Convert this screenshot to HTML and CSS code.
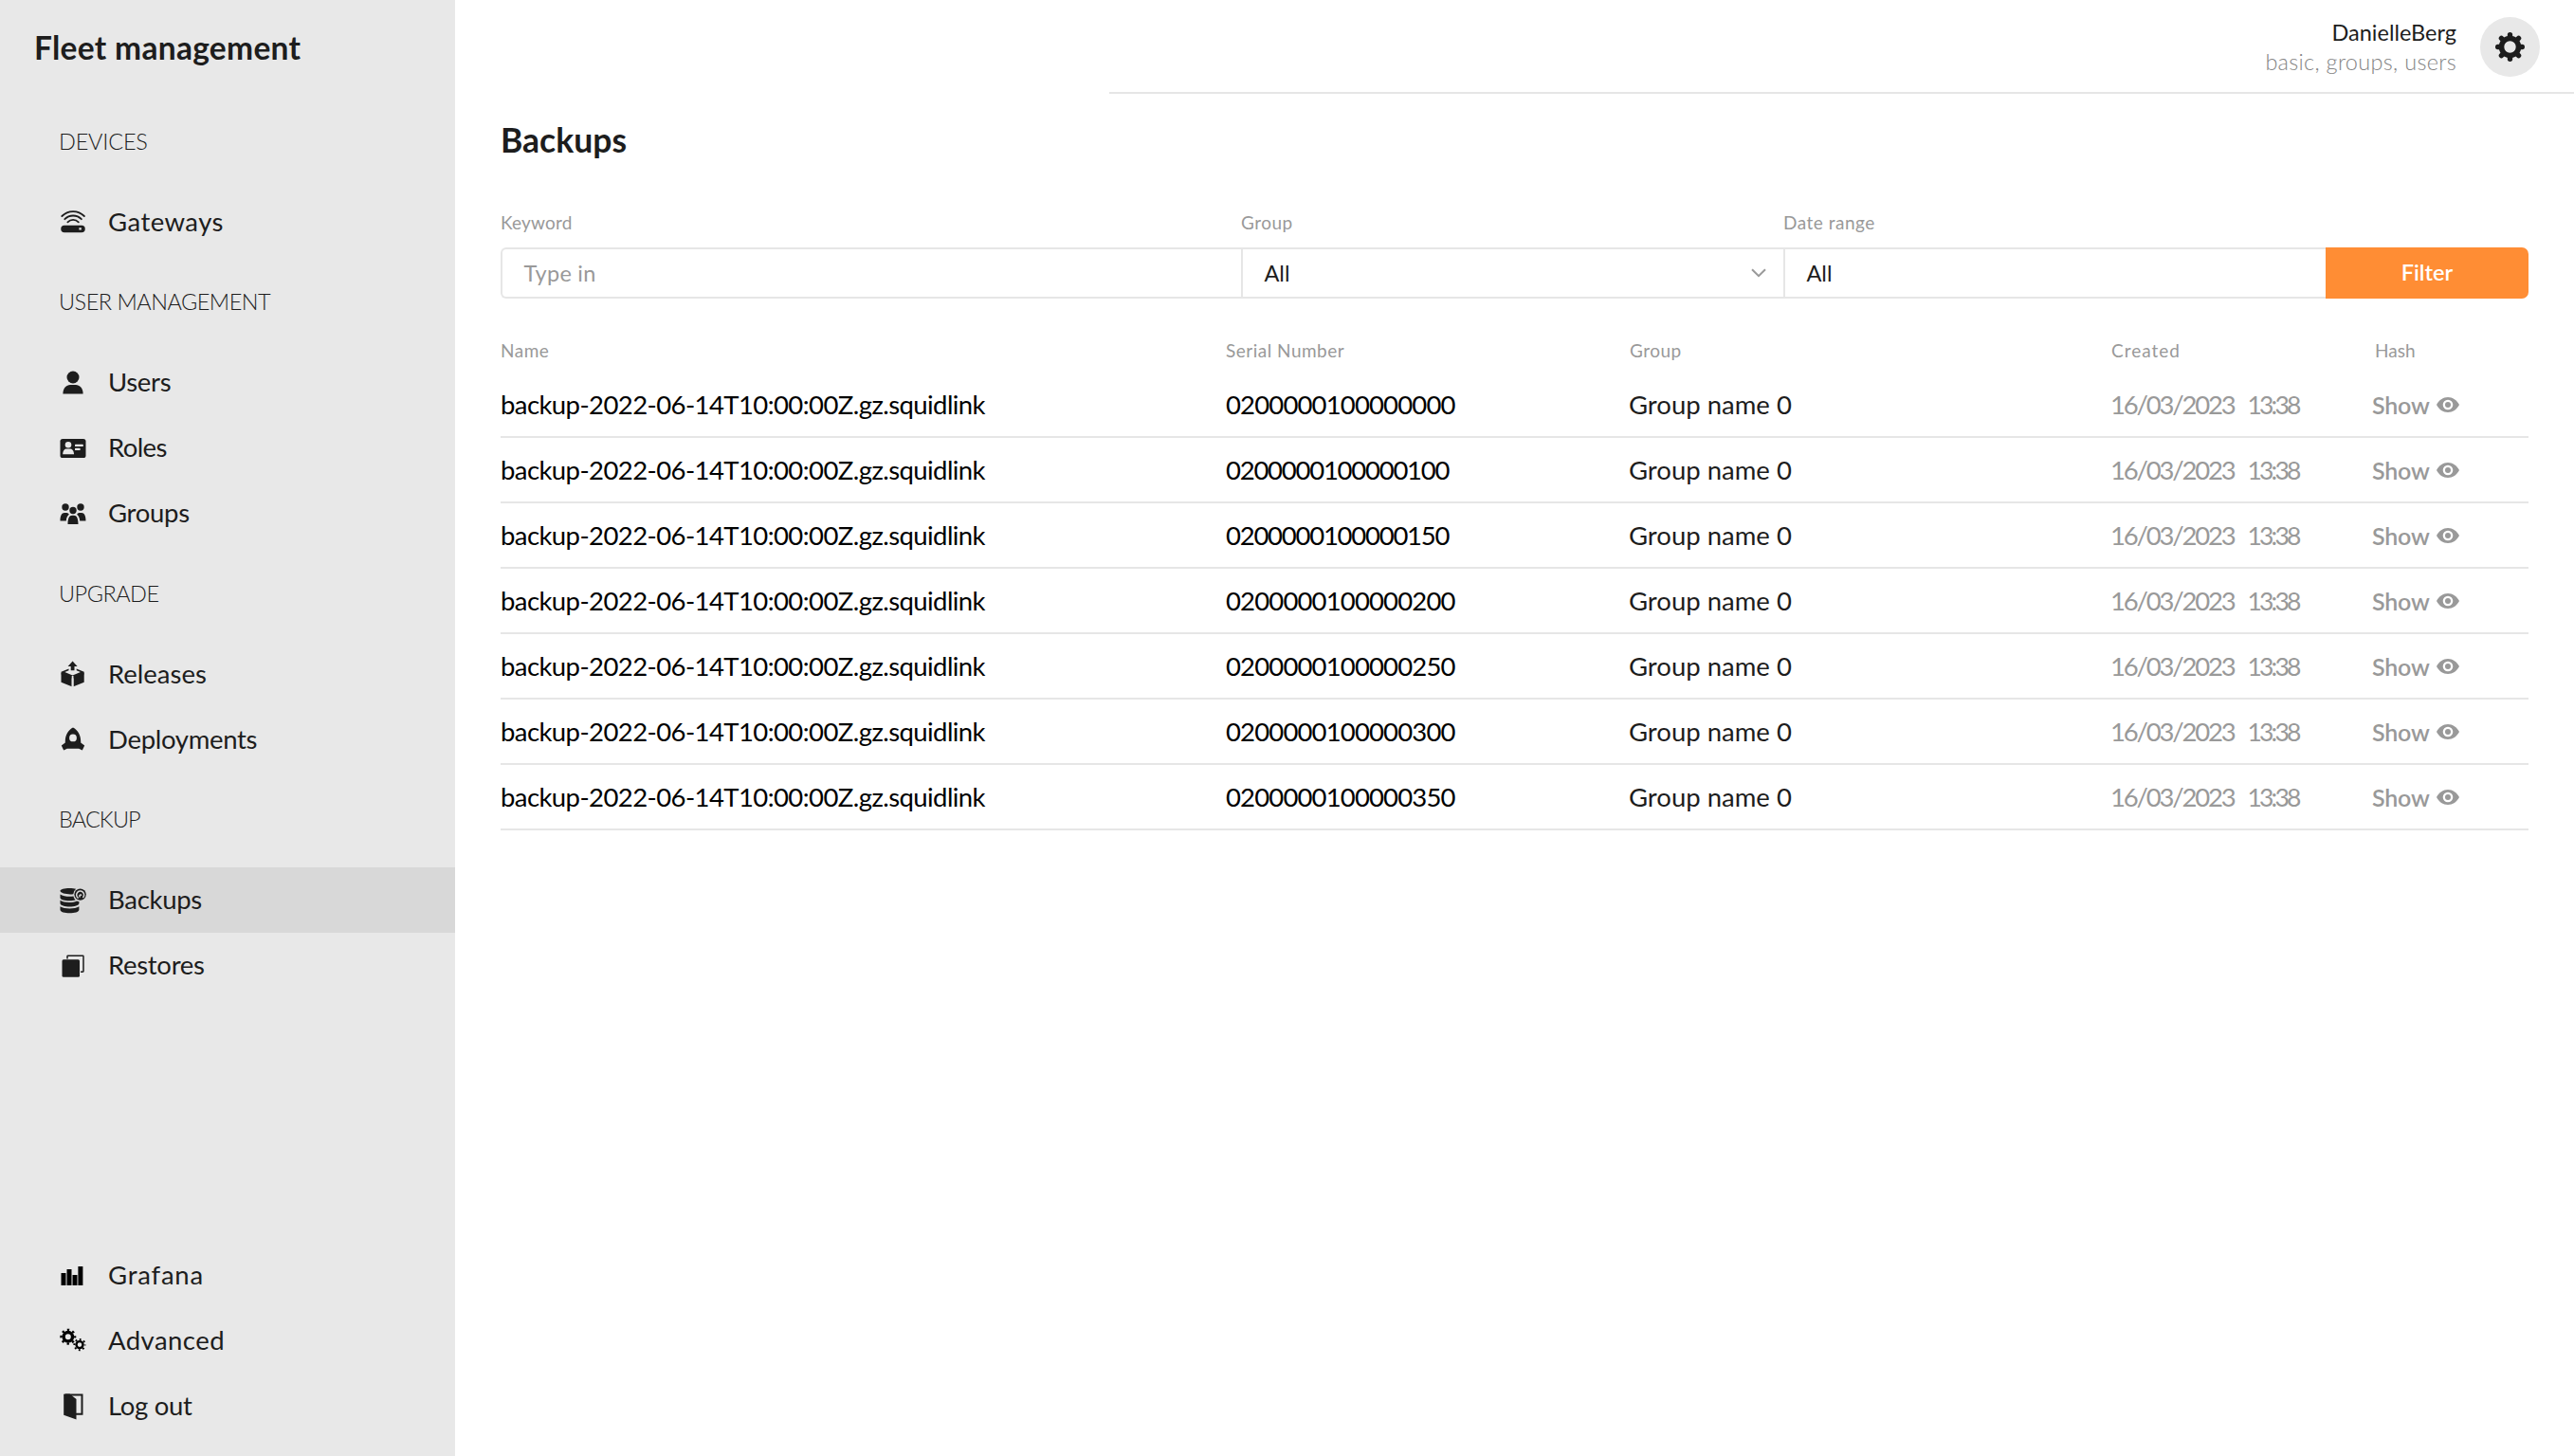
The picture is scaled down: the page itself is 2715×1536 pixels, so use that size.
FILE: index.html
```html
<!DOCTYPE html>
<html lang="en">
<head>
	<meta charset="UTF-8">
	<title>Fleet management</title>
	<link rel="stylesheet" href="styles.css">
</head>
<body>
	<div class="sidebar">
		<h1 class="brand">Fleet management</h1>
		<div class="nav">
			<h2 class="nav-title devices">DEVICES</h2>
			<a class="nav-item gateways" href="#">
				<svg class="icon" viewBox="0 0 28 28"><g fill="none" stroke="#1d1d1d" stroke-width="1.8" stroke-linecap="round"><path d="M2.300 8a16.500 16.500 0 0 1 23.600 0M5.300 11.200a12.300 12.300 0 0 1 17.600 0M8.400 14.300a8 8 0 0 1 11.400 0"/></g><path fill-rule="evenodd" d="M5 17.700h18a3.700 3.700 0 0 1 0 7.500H5a3.700 3.700 0 0 1 0-7.500zm15.400 2.500v2.400h2.400v-2.400z"/></svg>
				<span>Gateways</span>
			</a>
			<h2 class="nav-title management">USER MANAGEMENT</h2>
			<a class="nav-item users" href="#">
				<svg class="icon" viewBox="0 0 28 28"><circle cx="14" cy="8" r="6.500"/><path d="M3.400 25.500C3.400 19.500 7 16.100 11 16.100h6c4 0 7.600 3.400 7.600 9.400z"/></svg>
				<span>Users</span>
			</a>
			<a class="nav-item roles" href="#">
				<svg class="icon" viewBox="0 0 28 28"><rect x=".5" y="4" width="27" height="20" rx="2.600"/><g fill="#e8e8e8"><circle cx="9" cy="10.300" r="3.300"/><path d="M3.200 20.300c0-4 2-5.800 4-5.800h3.600c2.200 0 4.200 1.800 4.200 5.800z"/><rect x="16" y="9.800" width="8.800" height="2.200" rx=".6"/><rect x="16" y="13.800" width="5.600" height="2.200" rx=".6"/></g></svg>
				<span>Roles</span>
			</a>
			<a class="nav-item groups" href="#">
				<svg class="icon" viewBox="0 0 28 28"><circle cx="6" cy="7" r="3.700"/><circle cx="22" cy="7" r="3.700"/><circle cx="14" cy="10.500" r="3.700"/><path d="M.5 21.500c0-5.500 1.500-8.500 4.500-8.500h2.500c1 0 1.800.8 2.300 1.700-1.800 1.500-2.800 3.500-3 6.800zM27.500 21.500c0-5.500-1.500-8.500-4.500-8.500h-2.500c-1 0-1.800.8-2.300 1.700 1.800 1.500 2.800 3.500 3 6.800zM8.500 25c0-6 1.500-9.200 4.500-9.200h2c3 0 4.500 3.200 4.500 9.200z"/></svg>
				<span>Groups</span>
			</a>
			<h2 class="nav-title upgrade">UPGRADE</h2>
			<a class="nav-item releases" href="#">
				<svg class="icon" viewBox="0 0 28 28"><path d="M13.600.5l5 5.400h-3.100v4.400h-3.800V5.900H8.600zM1.500 13.200l11.200 4.300v9.800L1.500 22.800zM25.700 13.200l-11.200 4.300v9.800l11.200-4.500z"/><path d="M1.500 11.800l8-3.200v1.700l-4.200 1.800 8.300 3.400 8.300-3.400-4.200-1.800V8.600l8 3.200v2.400l-11 4.300h-2.200l-11-4.300z"/><path d="M13.600 16v12" fill="none" stroke="#e8e8e8" stroke-width="1.800"/></svg>
				<span>Releases</span>
			</a>
			<a class="nav-item deployments" href="#">
				<svg class="icon" viewBox="0 0 28 28"><path fill-rule="evenodd" d="M14 1.500c5 2.600 8.200 8 8.200 14.500v1.500l4 3-2.400 5-3.600-1.700H7.800l-3.600 1.700-2.400-5 4-3V16c0-6.500 3.200-11.900 8.200-14.500zm0 7a3.900 3.900 0 1 0 0 7.800 3.900 3.900 0 0 0 0-7.800z"/></svg>
				<span>Deployments</span>
			</a>
			<h2 class="nav-title backup">BACKUP</h2>
			<a class="nav-item active backups" href="#">
				<svg class="icon" viewBox="0 0 28 28"><path d="M.5 3.800C.5 2.200 5 1 10.300 1c2.700 0 5 .3 6.800.8a8 8 0 0 0-2.800 5.400c-5.300.8-13.800-.7-13.800-3.400zM.5 7.500c3 2 9 2.800 14 2 .4 1.600 1.200 3 2.300 4-5.600 1.400-16.300.7-16.300-2.500zM.5 13.800c3.800 2.700 12.500 3 17.600.7.8.4 1.500.5 2.300.5v2c0 4.600-19.900 4.600-19.900 0zM.5 20.300c4.500 3 15.400 3 19.900 0v3.500c0 4.700-19.900 4.700-19.900 0z"/><circle cx="21.600" cy="7.600" r="6.200"/><path fill="none" stroke="#d8d8d8" stroke-width="1.500" d="M19.600 11.500a4 4 0 1 1 4.800-.5M21 10.500V8.600a1.200 1.200 0 0 1 2 0"/></svg>
				<span>Backups</span>
			</a>
			<a class="nav-item restores" href="#">
				<svg class="icon" viewBox="0 0 28 28"><rect x="2.500" y="7.300" width="18.500" height="18.500" rx="1.500"/><path fill="none" stroke="#1d1d1d" stroke-width="1.500" d="M8 6.500V3.900a.7.700 0 0 1 .7-.7h15.600a.7.700 0 0 1 .7.700v15.600a.7.700 0 0 1-.7.700H22"/></svg>
				<span>Restores</span>
			</a>
		</div>
		<div class="nav nav-bottom">
			<a class="nav-item grafana" href="#">
				<svg class="icon black" viewBox="0 0 28 28"><path d="M1.500 11h5v13h-5zM7.500 7h5v17h-5zM13.500 13h5v11h-5zM19.400 4h5v20h-5z"/></svg>
				<span>Grafana</span>
			</a>
			<a class="nav-item advanced" href="#">
				<svg class="icon black" viewBox="0 0 28 28"><g fill="none" stroke="#000"><circle cx="8.800" cy="9.200" r="4.700" stroke-width="3.400"/><circle cx="8.800" cy="9.200" r="7.300" stroke-width="2.400" stroke-dasharray="2.400 3.330" stroke-dashoffset="1.200"/><circle cx="21" cy="17.600" r="3.500" stroke-width="2.400"/><circle cx="21" cy="17.600" r="5.600" stroke-width="2" stroke-dasharray="1.800 2.600" stroke-dashoffset=".9"/></g></svg>
				<span>Advanced</span>
			</a>
			<a class="nav-item logout" href="#">
				<svg class="icon" viewBox="0 0 28 28"><path d="M5 .5h5.500L17.500 6v21.500L4.200 22.700V1.300A.8.800 0 0 1 5 .5z"/><path fill="none" stroke="#1d1d1d" stroke-width="2" d="M6 1.500h17.500v20.300H17"/></svg>
				<span>Log out</span>
			</a>
		</div>
	</div>
	<div class="main">
		<div class="topbar">
			<div class="user">
				<div class="user-name">DanielleBerg</div>
				<div class="user-roles">basic, groups, users</div>
			</div>
			<a class="settings" href="#">
				<svg viewBox="0 0 30 30"><circle cx="15" cy="15" r="8.700" fill="none" stroke="#1d1d1d" stroke-width="5.400"/><g fill="none" stroke="#1d1d1d" stroke-width="5.200" stroke-linecap="round"><path d="M15 2.600v3M15 24.400v3M2.600 15h3M24.400 15h3M6.200 6.200l2 2M21.800 21.800l2 2M6.200 23.800l2-2M21.800 8.200l2-2"/></g></svg>
			</a>
		</div>
		<div class="content">
			<h1 class="page-title">Backups</h1>
			<div class="filters">
				<div class="field field-keyword">
					<label>Keyword</label>
					<div class="control placeholder">Type in</div>
				</div>
				<div class="field field-group">
					<label>Group</label>
					<div class="control">
						<span>All</span>
						<svg class="chevron" viewBox="0 0 16 10"><path d="M1 1.200l7 7 7-7"/></svg>
					</div>
				</div>
				<div class="field field-date">
					<label>Date range</label>
					<div class="control">All</div>
				</div>
				<a class="filter-btn" href="#">Filter</a>
			</div>
			<div class="table">
				<div class="row head">
					<span>Name</span><span>Serial Number</span><span class="head-group">Group</span><span class="head-created">Created</span><span class="head-hash">Hash</span>
				</div>
				<div id="rows"></div>
			</div>
		</div>
	</div>
	<script type="text/javascript">
		let oRows = document.getElementById("rows");
		let serials = ["000", "100", "150", "200", "250", "300", "350"];
		let eye = '<svg class="eye" viewBox="0 0 24 16"><path fill-rule="evenodd" d="M12 0c5 0 9.500 3 12 8-2.500 5-7 8-12 8S2.500 13 0 8c2.500-5 7-8 12-8zm0 2.700a5.300 5.300 0 1 0 0 10.600 5.300 5.300 0 0 0 0-10.600z"/><circle cx="12" cy="8" r="3"/></svg>';

		oRows.innerHTML = serials.map(function(s){
			return '<div class="row">'
				+ '<span class="name">backup-2022-06-14T10:00:00Z.gz.squidlink</span>'
				+ '<span class="serial">0200000100000' + s + '</span>'
				+ '<span class="group">Group name 0</span>'
				+ '<span class="created"><span class="date">16/03/2023</span><span class="time">13:38</span></span>'
				+ '<a class="show" href="#"><span>Show</span>' + eye + '</a>'
				+ '</div>';
		}).join("");
	</script>
</body>
</html>
```
FILE: styles.css
```css
* {
	margin: 0;
	padding: 0;
	box-sizing: border-box;
}
body {
	display: flex;
	height: 1536px;
	font-family: Lato, "Open Sans", sans-serif;
	font-size: 27.5px;
	line-height: 32px;
	color: #1d1d1d;
	background: #fff;
	overflow: hidden;
	white-space: nowrap;
}
a {
	text-decoration: none;
	color: inherit;
}

/* sidebar */
.sidebar {
	display: flex;
	flex-direction: column;
	flex: none;
	width: 480px;
	height: 1536px;
	padding-bottom: 18px;
	background: #e8e8e8;
}
.brand {
	height: 99.6px;
	padding: 30px 0 0 36px;
	font-size: 33.5px;
	line-height: 40px;
	font-weight: 700;
	letter-spacing: .3px;
}
.nav-title {
	display: flex;
	align-items: center;
	height: 100.4px;
	padding: 0 0 2px 62px;
	font-size: 23.5px;
	font-weight: 300;
	letter-spacing: -.5px;
}
.nav-title.devices {
	letter-spacing: -.2px;
}
.nav-title.backup {
	letter-spacing: -.9px;
}
.nav-item {
	display: flex;
	align-items: center;
	height: 69px;
	padding-left: 62.5px;
	letter-spacing: -.3px;
}
.nav-item span {
	padding-bottom: 1px;
	margin-left: 23.5px;
}
.nav-item.gateways,
.nav-item.advanced {
	letter-spacing: .45px;
}
.nav-item.roles {
	letter-spacing: -.6px;
}
.nav-item.releases {
	letter-spacing: 0;
}
.nav-item.grafana {
	letter-spacing: .8px;
}
.nav-item.active {
	background: #d8d8d8;
}
.nav-bottom {
	margin-top: auto;
}
.icon {
	flex: none;
	width: 28px;
	height: 28px;
	fill: #1d1d1d;
}
.icon.black {
	fill: #000;
}

/* top bar */
.main {
	flex: 1;
	min-width: 0;
}
.topbar {
	display: flex;
	justify-content: flex-end;
	align-items: center;
	gap: 25px;
	height: 99px;
	margin-left: 690px;
	padding: 2px 36px 0 0;
	border-bottom: 2px solid #e6e6e6;
}
.user {
	text-align: right;
	font-size: 23.5px;
	line-height: 31px;
}
.user-roles {
	color: #858585;
	font-weight: 300;
	letter-spacing: .3px;
}
.settings {
	display: flex;
	align-items: center;
	justify-content: center;
	width: 63px;
	height: 63px;
	border-radius: 50%;
	background: #e8e8e8;
}
.settings svg {
	width: 31px;
	height: 31px;
}

/* page */
.content {
	padding: 27px 48px 0;
}
.page-title {
	height: 96px;
	font-size: 35.5px;
	line-height: 44px;
	font-weight: 700;
}
.filters {
	display: flex;
	align-items: flex-end;
	height: 93px;
}
.field label {
	display: block;
	height: 39px;
	line-height: 25px;
	font-size: 19px;
	color: #999;
	letter-spacing: .5px;
}
.field-keyword label {
	letter-spacing: .2px;
}
.control {
	display: flex;
	align-items: center;
	justify-content: space-between;
	height: 54px;
	padding: 0 18px 1px 22.5px;
	border: 2px solid #e6e6e6;
	border-right: none;
	font-size: 23.5px;
}
.placeholder {
	color: #999;
	border-radius: 6px 0 0 6px;
	letter-spacing: .25px;
}
.field-keyword {
	width: 781px;
}
.field-group {
	width: 572px;
}
.field-date {
	width: 572px;
}
.chevron {
	width: 16px;
	height: 10px;
	fill: none;
	stroke: #999;
	stroke-width: 2;
}
.filter-btn {
	flex: 1;
	height: 54px;
	line-height: 53px;
	border-radius: 0 7px 7px 0;
	background: #ff8d34;
	color: #fff;
	font-size: 23.5px;
	font-weight: 600;
	text-align: center;
}

/* table */
.row {
	display: grid;
	grid-template-columns: 765px 425px 508px 276px 1fr;
	align-items: center;
	height: 69px;
	border-bottom: 2px solid #e6e6e6;
}
.row.head {
	height: 78px;
	padding-top: 38.5px;
	align-items: start;
	border: none;
	font-size: 19px;
	color: #999;
	letter-spacing: .5px;
}
.head .head-group {
	margin-left: 1px;
}
.head .head-created {
	margin-left: 1px;
	letter-spacing: 1px;
}
.head .head-hash {
	margin-left: 3px;
	letter-spacing: 0;
}
.name,
.serial {
	color: #000;
}
.name {
	letter-spacing: -.58px;
}
.serial {
	letter-spacing: -.85px;
}
.row:nth-child(2) .serial,
.row:nth-child(3) .serial {
	letter-spacing: -1.25px;
}
.created {
	display: flex;
	gap: 14px;
	color: #999;
}
.date {
	letter-spacing: -2.2px;
}
.time {
	font-size: 26.5px;
	letter-spacing: -2.8px;
}
.show {
	display: flex;
	align-items: center;
	gap: 7px;
	color: #999;
	font-size: 25px;
	font-weight: 600;
	letter-spacing: -.2px;
}
.eye {
	width: 24px;
	height: 16px;
	fill: #999;
}
```
